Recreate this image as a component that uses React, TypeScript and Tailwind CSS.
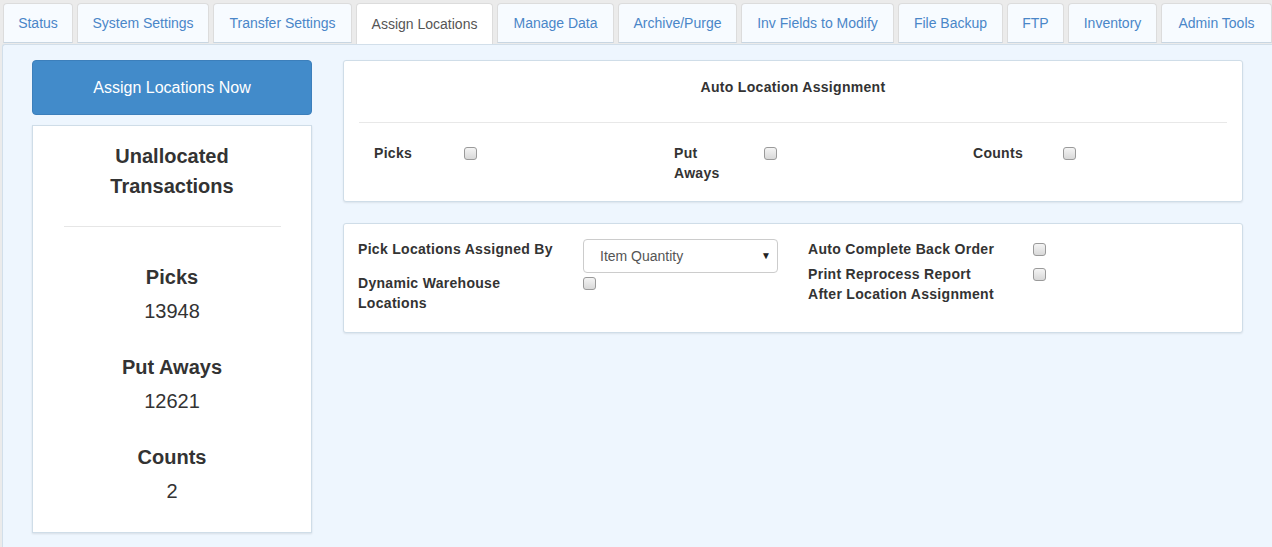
const tabs: [string, string][] = [
  ['Status', 'w-[70px]'],
  ['System Settings', 'w-[132px]'],
  ['Transfer Settings', 'w-[139px]'],
  ['Assign Locations', 'w-[137px]'],
  ['Manage Data', 'w-[117px]'],
  ['Archive/Purge', 'w-[119px]'],
  ['Inv Fields to Modify', 'w-[153px]'],
  ['File Backup', 'w-[105px]'],
  ['FTP', 'w-[57px]'],
  ['Inventory', 'w-[89px]'],
  ['Admin Tools', 'w-[111px]'],
];

function Box() {
  return (
    <span className="block w-[13px] h-[13px] rounded-[3px] border border-[#9a9a9a] bg-gradient-to-b from-[#f4f4f4] to-[#d8d8d8] shrink-0" />
  );
}

function Stat({ label, value }: { label: string; value: string }) {
  return (
    <div className="flex flex-col items-center">
      <div className="text-[20px] font-bold leading-[30px] text-[#333]">{label}</div>
      <div className="text-[20px] leading-[30px] text-[#333] mt-[4px]">{value}</div>
    </div>
  );
}

export default function App() {
  return (
    <div
      className="w-[1272px] h-[547px] bg-[#ebebeb] flex flex-col overflow-hidden text-[14px] text-[#333]"
      style={{ fontFamily: '"Liberation Sans", Arial, sans-serif' }}
    >
      {/* tabs */}
      <nav className="flex gap-[4px] pl-[3px] pt-[3px] h-[44px] shrink-0">
        {tabs.map(([t, w]) => {
          const active = t === 'Assign Locations';
          return (
            <div
              key={t}
              className={
                (active
                  ? 'h-[41px] border-b-0 bg-white text-[#555] '
                  : 'h-[40px] border-b-[#c8d6e2] bg-[#f7fbff] text-[#4a86c8] ') +
                w +
                ' shrink-0 whitespace-nowrap flex items-center justify-center rounded-t-[4px] border border-[#dcdcdc]'
              }
            >
              {t}
            </div>
          );
        })}
      </nav>

      {/* content */}
      <div className="flex-1 ml-[2px] bg-[#eef6fe] border-t border-l border-[#d2dfea] rounded-tl-[3px] flex gap-[31px] pl-[29px] pt-[15px]">
        {/* left column */}
        <div className="w-[280px] flex flex-col gap-[10px] shrink-0">
          <button className="h-[55px] rounded-[4px] bg-[#428bca] border border-[#3c7fbb] text-white text-[16px]">
            Assign Locations Now
          </button>
          <div className="bg-white border border-[#cfdde8] shadow-[0_1px_2px_rgba(0,0,0,0.1)] h-[408px] flex flex-col items-center pt-[15px]">
            <div className="text-[20px] font-bold leading-[30px] text-center text-[#333]">
              Unallocated
              <br />
              Transactions
            </div>
            <div className="w-[217px] border-t border-[#e6e6e6] mt-[25px] mb-[35px]" />
            <div className="flex flex-col gap-[26px]">
              <Stat label="Picks" value="13948" />
              <Stat label="Put Aways" value="12621" />
              <Stat label="Counts" value="2" />
            </div>
          </div>
        </div>

        {/* right column */}
        <div className="w-[900px] shrink-0 flex flex-col gap-[21px]">
          <div className="bg-white border border-[#cfdde8] rounded-[3px] shadow-[0_1px_2px_rgba(0,0,0,0.08)] h-[142px] px-[15px]">
            <div className="text-center font-bold text-[14px] tracking-[0.3px] leading-[20px] pt-[16px] h-[61px]">
              Auto Location Assignment
            </div>
            <div className="border-t border-[#e8e8e8]" />
            <div className="flex pl-[15px] pt-[20px] font-bold text-[14px] tracking-[0.3px] leading-[20px]">
              <div className="w-[300px] flex items-start">
                <span className="w-[90px]">Picks</span>
                <span className="mt-[4px]"><Box /></span>
              </div>
              <div className="w-[299px] flex items-start">
                <span className="w-[90px] pr-[40px]">Put Aways</span>
                <span className="mt-[4px]"><Box /></span>
              </div>
              <div className="w-[200px] flex items-start">
                <span className="w-[90px]">Counts</span>
                <span className="mt-[4px]"><Box /></span>
              </div>
            </div>
          </div>

          <div className="bg-white border border-[#cfdde8] rounded-[3px] shadow-[0_1px_2px_rgba(0,0,0,0.08)] h-[110px] px-[14px] pt-[15px] flex font-bold text-[14px] tracking-[0.3px] leading-[20px]">
            <div className="w-[450px] flex flex-col">
              <div className="flex items-start">
                <span className="w-[225px]">Pick Locations Assigned By</span>
                <div className="w-[195px] h-[34px] border border-[#cccccc] rounded-[4px] flex items-center justify-between pl-[16px] pr-[6px] font-normal text-[14px] text-[#555] tracking-normal">
                  <span>Item Quantity</span>
                  <span className="text-[10px] text-[#222]">▼</span>
                </div>
              </div>
              <div className="flex items-start">
                <span className="w-[225px]">
                  Dynamic Warehouse
                  <br />
                  Locations
                </span>
                <span className="mt-[4px]"><Box /></span>
              </div>
            </div>
            <div className="flex flex-col">
              <div className="flex items-start">
                <span className="w-[225px]">Auto Complete Back Order</span>
                <span className="mt-[4px]"><Box /></span>
              </div>
              <div className="flex items-start mt-[5px]">
                <span className="w-[225px]">
                  Print Reprocess Report
                  <br />
                  After Location Assignment
                </span>
                <span className="mt-[4px]"><Box /></span>
              </div>
            </div>
          </div>
        </div>
      </div>
    </div>
  );
}
